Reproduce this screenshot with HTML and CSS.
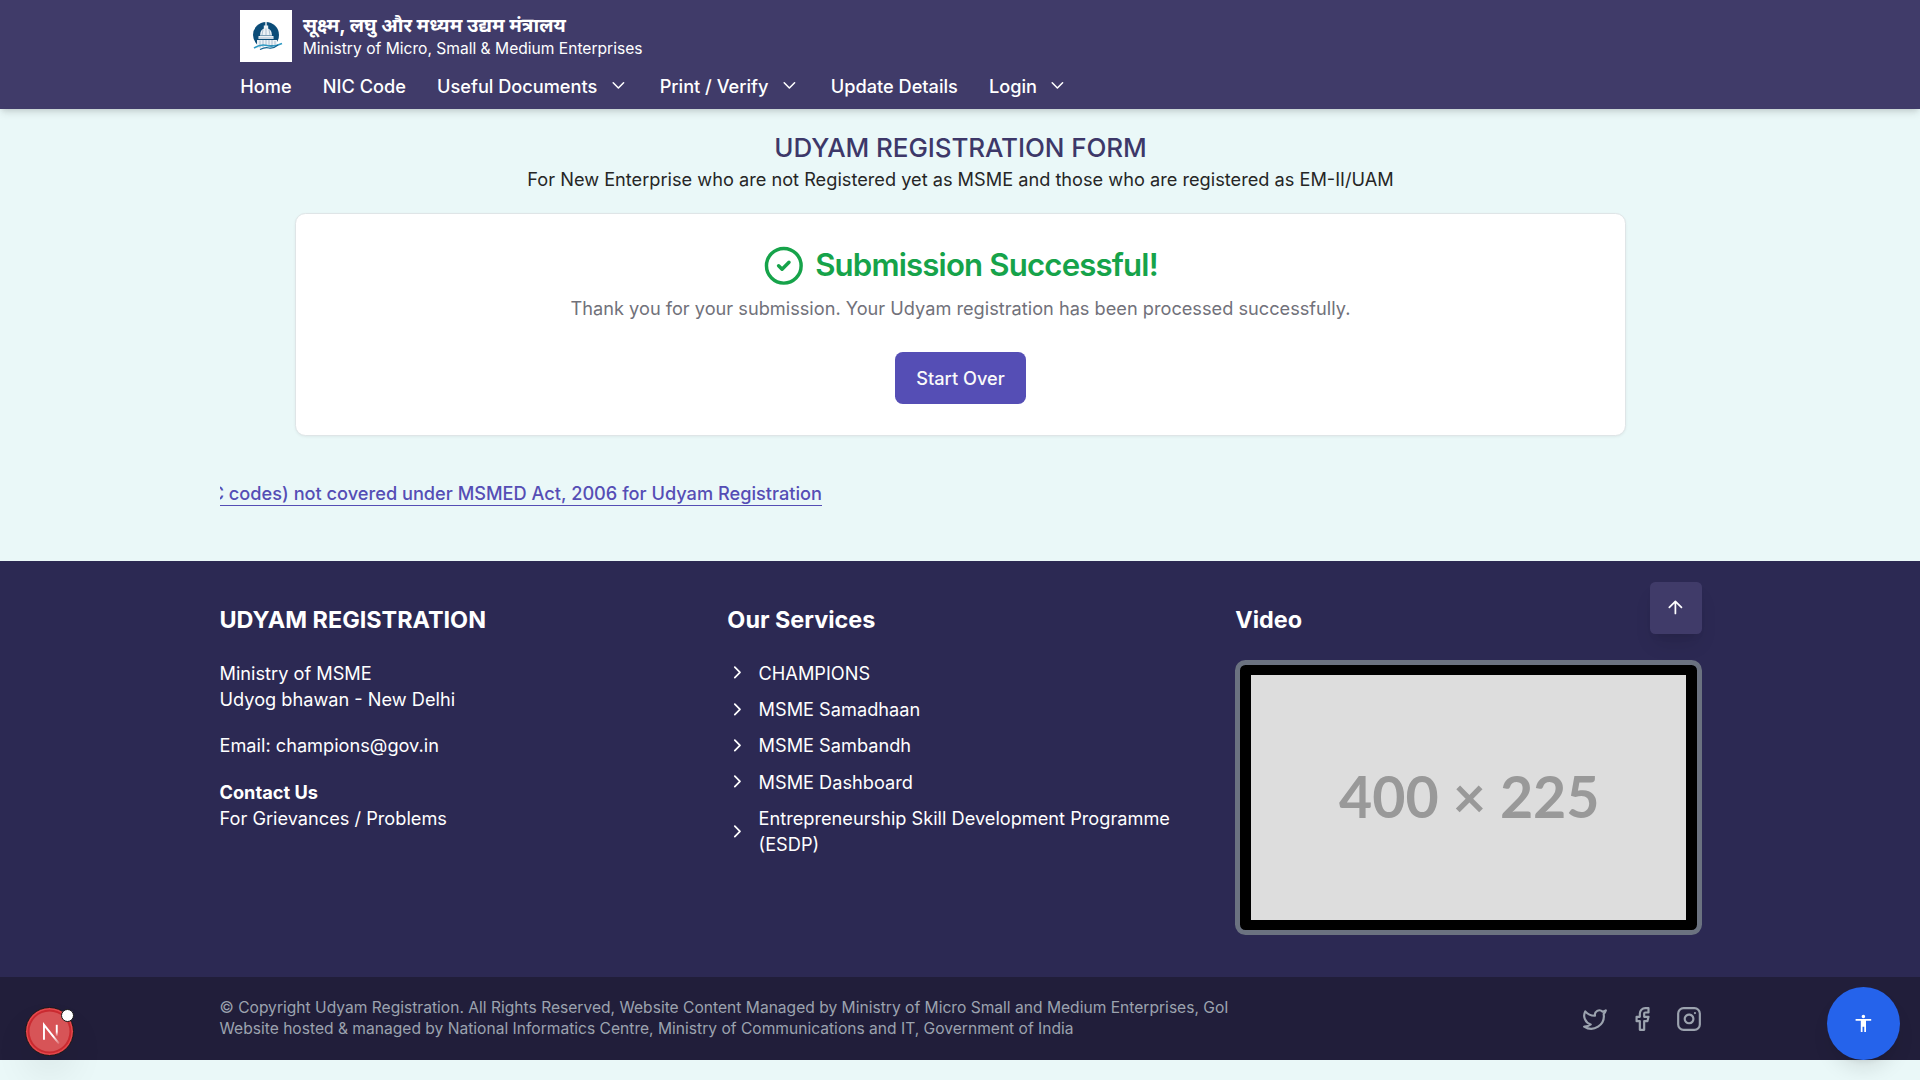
FILE: index.html
```html
<!DOCTYPE html>
<html lang="en">
<head>
<meta charset="utf-8">
<title>Udyam Registration</title>
<link rel="stylesheet" href="styles.css">
</head>
<body>
<header class="header">
  <div class="container header-inner">
    <div class="brand">
      <svg class="brand-logo" viewBox="0 0 52 52" aria-hidden="true">
        <rect width="52" height="52" fill="#fff"/>
        <circle cx="26" cy="25" r="13" fill="#0b4c78"/>
        <path d="M12 38q9-6 15-3t14-1l3 8H12z" fill="#fff"/>
        <path d="M25.300 11.500h1.400v4h-1.400zM23.800 15.500h4.400v3h-4.400zM20 25.500q0-7 6-7.500 6 .5 6 7.500zM18.500 26h15v3h-15zM17 30h20v5l-10 .5-10 3z" fill="#edf2f6"/>
        <path d="M20 30.500v7M23 30v7M26 30v6M29 30v5M32 30v5M35 31v4M23 19.500l-1 5.500M26 18.500V25M29 19.500l1 5.500M19 28h14" stroke="#8fabc0" stroke-width=".7" fill="none"/>
        <path d="M14 38q7-4.500 13-2.500t15-2" stroke="#2f9ac4" stroke-width="1.500" fill="none"/>
        <path d="M20 39.500q5-2.500 9-1.500t9-3" stroke="#14618f" stroke-width="1.200" fill="none"/>
      </svg>
      <div class="brand-text">
        <div class="brand-hi" lang="hi">सूक्ष्म, लघु और मध्यम उद्यम मंत्रालय</div>
        <div class="brand-en">Ministry of Micro, Small &amp; Medium Enterprises</div>
      </div>
    </div>
    <nav class="nav">
      <a class="nav-link">Home</a>
      <a class="nav-link">NIC Code</a>
      <a class="nav-link">Useful Documents <svg class="icon-sm thin" viewBox="0 0 24 24"><path d="m6 9 6 6 6-6"/></svg></a>
      <a class="nav-link">Print / Verify <svg class="icon-sm thin" viewBox="0 0 24 24"><path d="m6 9 6 6 6-6"/></svg></a>
      <a class="nav-link">Update Details</a>
      <a class="nav-link">Login <svg class="icon-sm thin" viewBox="0 0 24 24"><path d="m6 9 6 6 6-6"/></svg></a>
    </nav>
  </div>
</header>

<main class="main">
  <h1 class="page-title">UDYAM REGISTRATION FORM</h1>
  <p class="page-subtitle">For New Enterprise who are not Registered yet as MSME and those who are registered as EM-II/UAM</p>
  <section class="card">
    <div class="success">
      <svg class="success-icon" viewBox="0 0 24 24"><circle cx="12" cy="12" r="10"/><path d="m9 12 2 2 4-4"/></svg>
      <h2 class="success-title">Submission Successful!</h2>
    </div>
    <p class="success-text">Thank you for your submission. Your Udyam registration has been processed successfully.</p>
    <button class="button">Start Over</button>
  </section>
  <div class="container marquee">
    <div class="marquee-track"><a class="marquee-link">Activities (NIC codes) not covered under MSMED Act, 2006 for Udyam Registration</a></div>
  </div>
</main>

<footer class="footer">
  <div class="container footer-main">
    <div class="column">
      <h3 class="column-title">UDYAM REGISTRATION</h3>
      <p class="para">Ministry of MSME<br>Udyog bhawan - New Delhi</p>
      <p class="para">Email: champions@gov.in</p>
      <p class="para"><strong>Contact Us</strong><br>For Grievances / Problems</p>
    </div>
    <div class="column">
      <h3 class="column-title">Our Services</h3>
      <ul class="services">
        <li class="service"><svg class="icon-sm" viewBox="0 0 24 24"><path d="m9 18 6-6-6-6"/></svg><span>CHAMPIONS</span></li>
        <li class="service"><svg class="icon-sm" viewBox="0 0 24 24"><path d="m9 18 6-6-6-6"/></svg><span>MSME Samadhaan</span></li>
        <li class="service"><svg class="icon-sm" viewBox="0 0 24 24"><path d="m9 18 6-6-6-6"/></svg><span>MSME Sambandh</span></li>
        <li class="service"><svg class="icon-sm" viewBox="0 0 24 24"><path d="m9 18 6-6-6-6"/></svg><span>MSME Dashboard</span></li>
        <li class="service"><svg class="icon-sm" viewBox="0 0 24 24"><path d="m9 18 6-6-6-6"/></svg><span>Entrepreneurship Skill Development Programme (ESDP)</span></li>
      </ul>
    </div>
    <div class="column">
      <h3 class="column-title">Video</h3>
      <div class="video"><div class="placeholder">400 × 225</div></div>
    </div>
    <button class="to-top" aria-label="Back to top"><svg class="icon-sm" viewBox="0 0 24 24"><path d="m5 12 7-7 7 7M12 19V5"/></svg></button>
  </div>
  <div class="legal">
    <div class="container legal-inner">
      <p class="legal-text">© Copyright Udyam Registration. All Rights Reserved, Website Content Managed by Ministry of Micro Small and Medium Enterprises, GoI<br>Website hosted &amp; managed by National Informatics Centre, Ministry of Communications and IT, Government of India</p>
      <div class="social">
        <svg class="icon-md" viewBox="0 0 24 24"><path d="M22 4s-.7 2.100-2 3.400c1.600 10-9.400 17.300-18 11.600 2.200.1 4.400-.6 6-2C3 15.500.5 9.600 3 5c2.200 2.600 5.600 4.100 9 4-.9-4.200 4-6.600 7-3.800 1.100 0 3-1.200 3-1.200z"/></svg>
        <svg class="icon-md" viewBox="0 0 24 24"><path d="M18 2h-3a5 5 0 0 0-5 5v3H7v4h3v8h4v-8h3l1-4h-4V7a1 1 0 0 1 1-1h3z"/></svg>
        <svg class="icon-md" viewBox="0 0 24 24"><rect x="2" y="2" width="20" height="20" rx="5"/><path d="M16 11.370A4 4 0 1 1 12.630 8 4 4 0 0 1 16 11.370zM17.500 6.500h.01"/></svg>
      </div>
    </div>
  </div>
</footer>

<button class="a11y" aria-label="Accessibility"><svg class="a11y-icon" viewBox="0 0 24 24"><path d="M12 2c1.100 0 2 .9 2 2s-.9 2-2 2-2-.9-2-2 .9-2 2-2zm9 7h-6v13h-2v-6h-2v6H9V9H3V7h18v2z"/></svg></button>
<div class="dev-badge">
  <svg class="dev-mark" viewBox="0 0 40 40" fill="none">
    <defs>
      <linearGradient id="diag" x1="25" y1="24" x2="32.500" y2="33" gradientUnits="userSpaceOnUse"><stop stop-color="#fff"/><stop offset="1" stop-color="#fff" stop-opacity="0"/></linearGradient>
      <linearGradient id="stem" x1="27.500" y1="12" x2="27.500" y2="25" gradientUnits="userSpaceOnUse"><stop stop-color="#fff"/><stop offset=".604" stop-color="#fff"/><stop offset="1" stop-color="#fff" stop-opacity="0"/></linearGradient>
    </defs>
    <path d="M13.300 28.500V12L30 33" stroke="url(#diag)" stroke-width="2.100"/>
    <path d="M27.500 12v13" stroke="url(#stem)" stroke-width="2.100"/>
  </svg>
  <span class="dev-dot"></span>
</div>
</body>
</html>
```

FILE: styles.css
```css
html { font-size: 20.8px; }
* { box-sizing: border-box; }
body {
  margin: 0;
  height: 1080px;
  overflow: hidden;
  background: #eaf8f8;
  color: #262626;
  font-family: Inter, "Noto Sans", sans-serif;
  font-size: 0.875rem;
  line-height: 1.25rem;
}
h1, h2, h3, p, ul { margin: 0; padding: 0; }
ul { list-style: none; }
button { border: 0; padding: 0; font: inherit; color: inherit; }
svg { display: block; flex: none; }

.header, .main, .footer { padding-left: 1px; }
.container { width: 71.25rem; margin: 0 auto; }
.icon-sm, .icon-md, .success-icon {
  fill: none;
  stroke: currentColor;
  stroke-width: 2;
  stroke-linecap: round;
  stroke-linejoin: round;
}
.icon-sm { width: 1rem; height: 1rem; }
.icon-md { width: 1.25rem; height: 1.25rem; }

.header {
  position: relative;
  background: #403b69;
  color: #fff;
  box-shadow: 0 5px 8px -1px rgba(0, 0, 0, 0.1), 0 3px 5px -2px rgba(0, 0, 0, 0.1);
}
.header-inner { padding: 0.5rem 1rem; display: flex; flex-direction: column; gap: 0.5rem; }
.brand { display: flex; align-items: center; gap: 0.5rem; height: 2.5rem; }
.brand-logo { width: 2.5rem; height: 2.5rem; }
.brand-hi { font-size: 19.4px; font-weight: 700; line-height: 22px; padding-bottom: 2px; white-space: nowrap; }
.brand-en { font-size: 15.6px; line-height: 21px; }
.nav { display: flex; gap: 1.5rem; font-weight: 500; }
.nav-link { display: flex; align-items: center; gap: 0.5rem; letter-spacing: -0.01px; }
.thin { stroke-width: 1.8; margin-top: -1px; }

.main { display: flex; flex-direction: column; align-items: center; height: 451.6px; padding-top: 1rem; }
.page-title { color: #3d3869; font-size: 1.25rem; font-weight: 500; line-height: 1.75rem; letter-spacing: -0.1px; }
.card {
  display: flex;
  flex-direction: column;
  align-items: center;
  width: 64rem;
  margin-top: 1rem;
  padding: 31px 1.5rem 1.5rem;
  background: #fff;
  border: 1px solid #dfe5e7;
  border-radius: 0.5rem;
  box-shadow: 0 1px 3px rgba(0, 0, 0, 0.06);
}
.success { display: flex; align-items: center; gap: 0.5rem; color: #16a34a; }
.success-icon { width: 2rem; height: 2rem; }
.success-title { font-size: 1.5rem; font-weight: 600; line-height: 2rem; letter-spacing: -0.027em; }
.success-text { margin-top: 8px; color: #71717a; }
.button {
  margin-top: 1.5rem;
  height: 2.5rem;
  padding: 0 1rem;
  border-radius: 0.375rem;
  background: #554eb5;
  color: #fafafa;
  font-weight: 500;
}
.marquee { margin-top: 45px; height: 28px; overflow: hidden; }
.marquee-track { width: 602.5px; display: flex; justify-content: flex-end; white-space: nowrap; }
.marquee-link { color: #554eb5; font-weight: 500; border-bottom: 1px solid #554eb5; line-height: 24px; }

.footer { background: #2c2953; color: #fff; }
.footer-main { position: relative; display: grid; grid-template-columns: repeat(3, 1fr); gap: 2rem; padding: 2rem 0; }
.column-title { font-size: 1.125rem; font-weight: 700; line-height: 1.75rem; margin-bottom: 1rem; }
.para { margin-bottom: 1rem; }
.services { display: flex; flex-direction: column; gap: 0.5rem; }
.service { display: flex; align-items: center; gap: 0.5rem; }
.video { border: 5px solid #6b7280; border-radius: 0.5rem; background: #000; padding: 0.5rem; }
.placeholder {
  display: flex;
  align-items: center;
  justify-content: center;
  aspect-ratio: 400 / 225;
  padding: 0 0 2px 2px;
  background: #ddd;
  color: #999;
  font-family: Lato, sans-serif;
  font-size: 57.3px;
  font-weight: 700;
}
.to-top {
  position: absolute;
  top: 1rem;
  right: 0;
  display: flex;
  align-items: center;
  justify-content: center;
  width: 2.5rem;
  height: 2.5rem;
  border-radius: 0.25rem;
  background: #403b69;
  box-shadow: 0 13px 20px -4px rgba(0, 0, 0, 0.1), 0 5px 8px -5px rgba(0, 0, 0, 0.1);
}
.legal { margin-left: -1px; padding: 1rem 0 1rem 1px; background: #211e3a; color: #9ca3af; }
.legal-inner { display: flex; align-items: center; justify-content: space-between; }
.legal-text { font-size: 0.75rem; line-height: 1rem; }
.social { display: flex; gap: 1rem; }

.a11y {
  position: fixed;
  right: 20px;
  bottom: 20px;
  display: flex;
  align-items: center;
  justify-content: center;
  width: 3.5rem;
  height: 3.5rem;
  border-radius: 50%;
  background: #2563eb;
  color: #fff;
  box-shadow: 0 13px 20px -4px rgba(0, 0, 0, 0.1), 0 5px 8px -5px rgba(0, 0, 0, 0.1);
}
.a11y-icon { width: 1rem; height: 1rem; fill: currentColor; }
.dev-badge {
  position: fixed;
  left: 25px;
  bottom: 24px;
  display: flex;
  align-items: center;
  justify-content: center;
  width: 49px;
  height: 49px;
  border-radius: 50%;
  border: 1px solid #171717;
  background: #d75457;
  box-shadow: inset 0 0 0 1.5px #e5484d, inset 0 0 0 3.5px #ca2a30, 0 20px 40px -6px rgba(0, 0, 0, 0.12);
}
.dev-mark { width: 36px; height: 36px; }
.dev-dot {
  position: absolute;
  top: 1px;
  right: -1px;
  width: 13px;
  height: 13px;
  border: 1px solid #171717;
  border-radius: 50%;
  background: #fff;
}
```
